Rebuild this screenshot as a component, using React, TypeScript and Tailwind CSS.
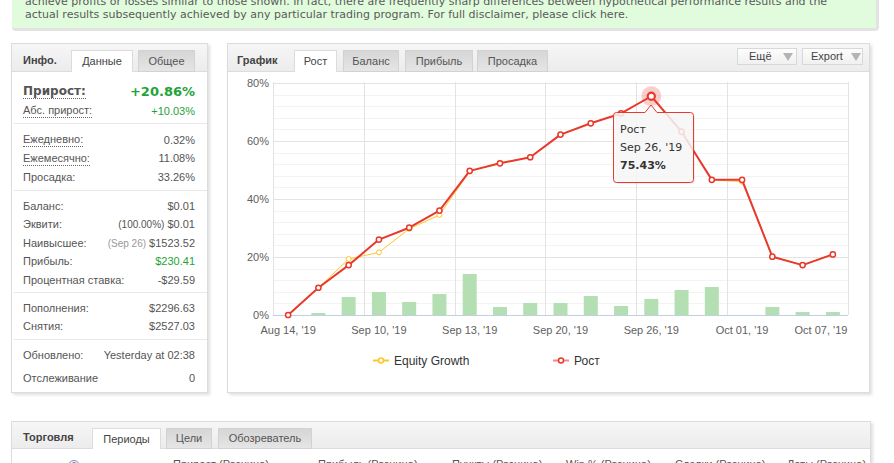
import React from "react";

const red = [0, 9.4, 17.2, 26, 30.1, 36, 49.7, 52.3, 54.4, 62.2, 66.1, 69.5, 75.43, 63.2, 46.6, 46.6, 20.1, 17.2, 20.9];
const equity = [0, 9.4, 19.3, 21.6, 29.7, 34.5, 49.5, 52.5, 54.4, 62.2, 66.1, 69.5, 75.43, 63.2, 46.6, 46.0, 20.1, 17.2, 20.9];
const bars = [0, 2, 18, 23, 13, 21, 41, 8, 12, 12, 19, 9, 16, 25, 28, 0, 8, 3, 3];

const X0 = 273;
const X1 = 848;
const Y0 = 315;
const cx = (i: number) => X0 + ((i + 0.5) * (X1 - X0)) / 19;
const cy = (v: number) => Y0 - v * 2.9;

const xLabels = [
  { t: "Aug 14, '19", x: cx(0) },
  { t: "Sep 10, '19", x: cx(3) },
  { t: "Sep 13, '19", x: cx(6) },
  { t: "Sep 20, '19", x: cx(9) },
  { t: "Sep 26, '19", x: cx(12) },
  { t: "Oct 01, '19", x: cx(15) },
  { t: "Oct 07, '19", x: 821 },
];

function Tab({ label, active, w, ml, h = "h-[22px]" }: { label: string; active?: boolean; w: string; ml: string; h?: string }) {
  return (
    <div
      className={
        active
          ? `${w} ${ml} ${h} -mb-px flex items-center justify-center border border-b-0 border-[#dcdcdc] bg-white text-[#444] relative z-10`
          : `${w} ${ml} ${h} -mb-px flex items-center justify-center border border-[#d2d2d2] bg-linear-to-b from-[#d6d6d6] to-[#e5e5e5] text-[#555]`
      }
    >
      {label}
    </div>
  );
}

function Row({ label, value, h = "h-[18.5px]", dotted, className = "" }: { label: React.ReactNode; value: React.ReactNode; h?: string; dotted?: boolean; className?: string }) {
  return (
    <div className={`${h} flex items-center justify-between pl-[11px] pr-[12px] ${className}`}>
      <span className={dotted ? "leading-[13px] border-b border-dotted border-[#666]" : "leading-[13px]"}>{label}</span>
      <span className="leading-[13px]">{value}</span>
    </div>
  );
}

const Sep = () => <div className="h-px ml-[2px] bg-[#e8e8e8]" />;

function Caret() {
  return (
    <svg width="10" height="8" viewBox="0 0 10 8" className="ml-auto">
      <polygon points="0,0 10,0 5,8" fill="#b4b4b4" />
    </svg>
  );
}

function Chart() {
  const minor: number[] = [];
  for (let v = 4; v < 80; v += 4) if (v % 20 !== 0) minor.push(v);
  const verticals = [0, 1, 2, 3, 4, 5].map((k) => X0 + k * ((X1 - X0) / 19) * 3).concat([X1]);
  const redPts = red.map((v, i) => `${cx(i)},${cy(v)}`).join(" ");
  const eqPts = equity.map((v, i) => `${cx(i)},${cy(v)}`).join(" ");
  const hx = cx(12);
  const hy = cy(75.43);
  const tip =
    "M616.5 112.5 H645 L651 105 L657 112.5 H690.5 Q693.5 112.5 693.5 115.5 V179.5 Q693.5 182.5 690.5 182.5 H616.5 Q613.5 182.5 613.5 179.5 V115.5 Q613.5 112.5 616.5 112.5 Z";
  return (
    <svg width="640" height="320" className="block">
      <g transform="translate(-228,-72)">
        {minor.map((v) => (
          <line key={v} x1={X0} x2={X1} y1={Math.round(cy(v)) + 0.5} y2={Math.round(cy(v)) + 0.5} stroke="#f3f3f3" />
        ))}
        {[20, 40, 60, 80].map((v) => (
          <line key={v} x1={X0} x2={X1} y1={Math.round(cy(v)) + 0.5} y2={Math.round(cy(v)) + 0.5} stroke="#e3e3e3" />
        ))}
        {verticals.map((x) => (
          <line key={x} x1={Math.round(x) + 0.5} x2={Math.round(x) + 0.5} y1={82} y2={315} stroke="#e3e3e3" />
        ))}
        {bars.map((h, i) =>
          h > 0 ? <rect key={i} x={cx(i) - 7} y={Y0 - h} width={14} height={h} fill="#b3dfb3" /> : null
        )}
        <line x1={X0} x2={X1} y1={315.5} y2={315.5} stroke="#c0d0e0" />

        <polyline points={eqPts} fill="none" stroke="#ffc629" strokeWidth={1} />
        {equity.map((v, i) => (
          <circle key={i} cx={cx(i)} cy={cy(v)} r={2.5} fill="#fff" stroke="#ffc629" strokeWidth={1} />
        ))}
        <polyline points={redPts} fill="none" stroke="#e8392d" strokeWidth={2} strokeLinejoin="round" />
        {red.map((v, i) => (
          <circle key={i} cx={cx(i)} cy={cy(v)} r={2.6} fill="#fff" stroke="#e8392d" strokeWidth={1.5} />
        ))}
        <circle cx={hx} cy={hy} r={10} fill="#e8392d" fillOpacity={0.25} />
        <circle cx={hx} cy={hy} r={3.6} fill="#fff" stroke="#e8392d" strokeWidth={2.2} />

        {[0, 20, 40, 60, 80].map((v) => (
          <text key={v} x={269} y={cy(v) + 4} textAnchor="end" fontSize="11" fill="#606060">
            {v}%
          </text>
        ))}
        {xLabels.map((l) => (
          <text key={l.t} x={l.x} y={334} textAnchor="middle" fontSize="11" fill="#606060">
            {l.t}
          </text>
        ))}

        <line x1={373} x2={389} y1={360.5} y2={360.5} stroke="#ffc629" strokeWidth={2} />
        <circle cx={381} cy={360.5} r={2.5} fill="#fff" stroke="#ffc629" strokeWidth={1.5} />
        <text x={394} y={364.5} fontSize="12" fill="#333">
          Equity Growth
        </text>
        <line x1={553} x2={569} y1={360.5} y2={360.5} stroke="#f08a84" strokeWidth={2} />
        <circle cx={561} cy={360.5} r={2.5} fill="#fff" stroke="#e8392d" strokeWidth={1.5} />
        <text x={574} y={364.5} fontSize="12" fill="#333">
          Рост
        </text>

        <g>
          <path d={tip} fill="#000" fillOpacity={0.06} transform="translate(1.5,1.5)" />
          <path d={tip} fill="#f8f8f8" fillOpacity={0.85} stroke="#e8392d" strokeWidth={1} />
          <text x={620} y={133} fontSize="11" fill="#333" fontFamily="'DejaVu Sans', sans-serif">
            Рост
          </text>
          <text x={620} y={151} fontSize="11" fill="#333" fontFamily="'DejaVu Sans', sans-serif">
            Sep 26, '19
          </text>
          <text x={620} y={168.5} fontSize="11" fontWeight="bold" fill="#333" fontFamily="'DejaVu Sans', sans-serif">
            75.43%
          </text>
        </g>
      </g>
    </svg>
  );
}

export default function App() {
  return (
    <div className="w-[894px] h-[463px] overflow-hidden bg-white font-['Liberation_Sans',Arial,sans-serif] text-[11px] text-[#555]">
      <div className="ml-[12px] w-[867px] -mt-[14px] pt-[9px] pb-[7px] pl-[13px] bg-[#e0fcdc] border-b-[3px] border-r-[3px] border-[#e3e3e3] rounded-b-[4px] font-['DejaVu_Sans',sans-serif] text-[11px] leading-[13px] text-[#5a5a5a] whitespace-nowrap">
        achieve profits or losses similar to those shown. In fact, there are frequently sharp differences between hypothetical performance results and the
        <br />
        actual results subsequently achieved by any particular trading program. For full disclaimer, please click here.
      </div>

      <div className="flex mt-[12px] ml-[11px]">
        <div className="w-[197px] h-[350px] border border-[#dcdcdc] bg-white shadow-[2px_2px_3px_rgba(0,0,0,0.13)] flex flex-col">
          <div className="h-[28px] flex items-end border-b border-[#dcdcdc] bg-linear-to-b from-[#f6f6f6] to-[#ececec] pl-[11px]">
            <div className="w-[34px] h-[22px] flex items-center font-bold text-[#444]">Инфо.</div>
            <Tab label="Данные" active w="w-[62px]" ml="ml-[14px]" />
            <Tab label="Общее" w="w-[57px]" ml="ml-[5px]" />
          </div>
          <div className="pt-[10px] pb-[3px]">
            <Row
              h="h-[20px]"
              dotted
              label={<span className="font-['DejaVu_Sans',sans-serif] font-bold text-[12px] text-[#555]">Прирост:</span>}
              value={<span className="font-['DejaVu_Sans',sans-serif] font-bold text-[13px] text-[#1ea33a]">+20.86%</span>}
            />
            <Row h="h-[18px]" dotted label="Абс. прирост:" value={<span className="text-[#1ea33a]">+10.03%</span>} />
          </div>
          <Sep />
          <div className="pt-[7px] pb-[3.5px]">
            <Row dotted label="Ежедневно:" value="0.32%" />
            <Row dotted label="Ежемесячно:" value="11.08%" />
            <Row label="Просадка:" value="33.26%" />
          </div>
          <Sep />
          <div className="pt-[6px] pb-[2.5px]">
            <Row label="Баланс:" value="$0.01" />
            <Row
              label="Эквити:"
              value={
                <>
                  <span className="text-[10px]">(100.00%)</span> $0.01
                </>
              }
            />
            <Row
              label="Наивысшее:"
              value={
                <>
                  <span className="text-[10px] text-[#999]">(Sep 26)</span> $1523.52
                </>
              }
            />
            <Row label="Прибыль:" value={<span className="text-[#1ea33a]">$230.41</span>} />
            <Row label="Процентная ставка:" value="-$29.59" />
          </div>
          <Sep />
          <div className="pt-[6px] pb-[3px]">
            <Row label="Пополнения:" value="$2296.63" />
            <Row label="Снятия:" value="$2527.03" />
          </div>
          <Sep />
          <div className="pt-[6px] flex flex-col gap-[5px]">
            <Row h="h-[18px]" label="Обновлено:" value="Yesterday at 02:38" />
            <Row h="h-[18px]" label="Отслеживание" value="0" />
          </div>
        </div>

        <div className="ml-[19px] w-[643px] h-[350px] border border-[#dcdcdc] bg-white shadow-[2px_2px_3px_rgba(0,0,0,0.13)] flex flex-col">
          <div className="h-[28px] flex items-end border-b border-[#dcdcdc] bg-linear-to-b from-[#f6f6f6] to-[#ececec] pl-[9px] pr-[6px]">
            <div className="w-[42px] h-[22px] flex items-center font-bold text-[#444]">График</div>
            <Tab label="Рост" active w="w-[43px]" ml="ml-[15px]" />
            <Tab label="Баланс" w="w-[56px]" ml="ml-[6px]" />
            <Tab label="Прибыль" w="w-[68px]" ml="ml-[6px]" />
            <Tab label="Просадка" w="w-[71px]" ml="ml-[4px]" />
            <div className="ml-auto self-start mt-[4px] flex gap-[5px]">
              <div className="w-[60px] h-[17px] flex items-center pl-[11px] pr-[3px] border border-[#d8d8d8] bg-linear-to-b from-[#fdfdfd] to-[#f0f0f0] text-[#444]">
                Ещё
                <Caret />
              </div>
              <div className="w-[61px] h-[17px] flex items-center pl-[8px] pr-[1px] border border-[#d8d8d8] bg-linear-to-b from-[#fdfdfd] to-[#f0f0f0] text-[#444]">
                Export
                <Caret />
              </div>
            </div>
          </div>
          <Chart />
        </div>
      </div>

      <div className="mt-[28px] ml-[11px] w-[860px] h-[60px] border border-[#dcdcdc] bg-white shadow-[2px_2px_3px_rgba(0,0,0,0.13)]">
        <div className="h-[27px] flex items-end border-b border-[#dcdcdc] bg-linear-to-b from-[#f6f6f6] to-[#ececec] pl-[11px]">
          <div className="w-[54px] h-[21px] flex items-center font-bold text-[#444]">Торговля</div>
          <Tab label="Периоды" active w="w-[69px]" ml="ml-[15px]" h="h-[21px]" />
          <Tab label="Цели" w="w-[46px]" ml="ml-[5px]" h="h-[21px]" />
          <Tab label="Обозреватель" w="w-[94px]" ml="ml-[6px]" h="h-[21px]" />
        </div>
        <div className="flex pt-[9px] leading-[13px] text-[#555] whitespace-nowrap">
          <div className="w-[161px] pl-[56px]">
            <span className="inline-flex w-[12px] h-[12px] rounded-full border border-[#7a8fb5] text-[9px] leading-none text-[#5a74a8] items-center justify-center">?</span>
          </div>
          <div className="w-[145px]">Прирост (Разница)</div>
          <div className="w-[134px]">Прибыль (Разница)</div>
          <div className="w-[114px]">Пункты (Разница)</div>
          <div className="w-[109px]">Win % (Разница)</div>
          <div className="w-[112px]">Сделки (Разница)</div>
          <div>Лоты (Разница)</div>
        </div>
      </div>
    </div>
  );
}
